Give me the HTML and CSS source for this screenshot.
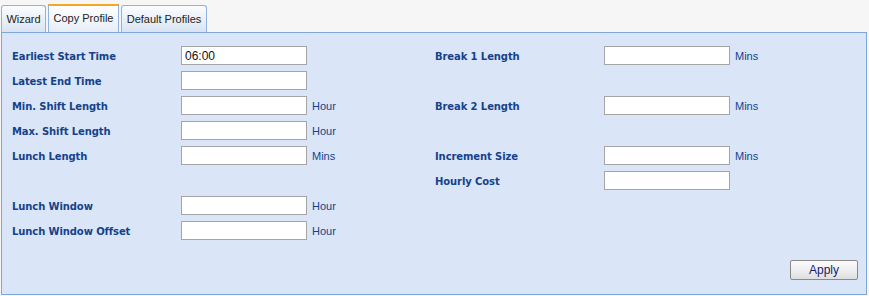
FILE: index.html
```html
<!DOCTYPE html>
<html>
<head>
<meta charset="utf-8">
<link rel="stylesheet" href="styles.css">
</head>
<body>
<div class="tabs">
  <div class="tab tab-wizard">Wizard</div>
  <div class="tab tab-copy active">Copy Profile</div>
  <div class="tab tab-default">Default Profiles</div>
</div>
<div class="panel">
  <div class="grid">
    <div class="field"><label class="lbl">Earliest Start Time</label><input class="inp" type="text" value="06:00"></div>
    <div class="field"><label class="lbl">Break 1 Length</label><input class="inp" type="text"><span class="unit">Mins</span></div>

    <div class="field"><label class="lbl">Latest End Time</label><input class="inp" type="text"></div>
    <div class="field empty"></div>

    <div class="field"><label class="lbl">Min. Shift Length</label><input class="inp" type="text"><span class="unit">Hour</span></div>
    <div class="field"><label class="lbl">Break 2 Length</label><input class="inp" type="text"><span class="unit">Mins</span></div>

    <div class="field"><label class="lbl">Max. Shift Length</label><input class="inp" type="text"><span class="unit">Hour</span></div>
    <div class="field empty"></div>

    <div class="field"><label class="lbl">Lunch Length</label><input class="inp" type="text"><span class="unit">Mins</span></div>
    <div class="field"><label class="lbl">Increment Size</label><input class="inp" type="text"><span class="unit">Mins</span></div>

    <div class="field empty"></div>
    <div class="field"><label class="lbl">Hourly Cost</label><input class="inp" type="text"></div>

    <div class="field"><label class="lbl">Lunch Window</label><input class="inp" type="text"><span class="unit">Hour</span></div>
    <div class="field empty"></div>

    <div class="field"><label class="lbl">Lunch Window Offset</label><input class="inp" type="text"><span class="unit">Hour</span></div>
    <div class="field empty"></div>
  </div>
  <div class="actions">
    <button class="btn" type="button">Apply</button>
  </div>
</div>
</body>
</html>
```

FILE: styles.css
```css
html, body {
  margin: 0;
  padding: 0;
  background: #f6f6f6;
  font-family: "Liberation Sans", Arial, sans-serif;
  width: 869px;
  height: 296px;
  overflow: hidden;
}

.tabs {
  display: flex;
  align-items: flex-end;
  gap: 2px;
  height: 32px;
  padding-left: 1px;
  box-sizing: border-box;
}

.tab {
  box-sizing: border-box;
  height: 27px;
  border: 1px solid #8db2e3;
  border-bottom: none;
  border-radius: 3px 3px 0 0;
  background: linear-gradient(#fafcff 0%, #eef3fa 40%, #d9e4f4 100%);
  color: #222;
  font-size: 11px;
  line-height: 26px;
  text-align: center;
}

.tab-wizard { width: 45px; }
.tab-copy { width: 71px; }
.tab-default { width: 86px; }

.tab.active {
  height: 28px;
  border-top: 2px solid #f5a623;
  border-radius: 0;
  background: linear-gradient(#ffffff 0%, #f3f6fb 50%, #e6edf8 100%);
  line-height: 25px;
}

.panel {
  box-sizing: border-box;
  margin-left: 1px;
  width: 866px;
  height: 263px;
  border: 1px solid #7fa8da;
  background: #dae6f8;
  display: flex;
  flex-direction: column;
  padding: 13px 8px 14px 10px;
}

.grid {
  display: grid;
  grid-template-columns: 423px 1fr;
  grid-auto-rows: 19px;
  row-gap: 6px;
}

.field {
  display: flex;
  align-items: center;
}

.lbl {
  width: 169px;
  flex: none;
  padding-top: 2px;
  font-family: "DejaVu Sans", Verdana, sans-serif;
  font-weight: bold;
  font-size: 10px;
  letter-spacing: -0.1px;
  color: #15428b;
}

.inp {
  box-sizing: border-box;
  width: 126px;
  height: 19px;
  margin: 0;
  border: 1px solid #a5a5a5;
  background: #fff;
  padding: 0 3px;
  font-family: "Liberation Sans", Arial, sans-serif;
  font-size: 12px;
  color: #111;
  outline: none;
}

.unit {
  margin-left: 5px;
  font-size: 11px;
  color: #15428b;
}

.actions {
  margin-top: auto;
  display: flex;
  justify-content: flex-end;
}

.btn {
  box-sizing: border-box;
  width: 68px;
  height: 20px;
  margin: 0;
  border: 1px solid #8a8a8a;
  border-radius: 2px;
  background: linear-gradient(#fbfbfb 0%, #efefef 50%, #dedede 100%);
  font-family: "Liberation Sans", Arial, sans-serif;
  font-size: 12px;
  color: #1a1a6e;
  padding: 0;
}
```
